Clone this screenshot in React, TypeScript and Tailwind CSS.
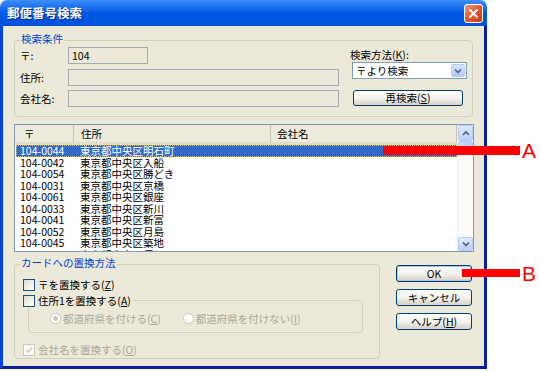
import React from 'react'

const ROWS = [
  ['104-0044', '東京都中央区明石町'],
  ['104-0042', '東京都中央区入船'],
  ['104-0054', '東京都中央区勝どき'],
  ['104-0031', '東京都中央区京橋'],
  ['104-0061', '東京都中央区銀座'],
  ['104-0033', '東京都中央区新川'],
  ['104-0041', '東京都中央区新富'],
  ['104-0052', '東京都中央区月島'],
  ['104-0045', '東京都中央区築地'],
  ['104-0051', '東京都中央区佃'],
]

function U({ c }: { c: string }) {
  return <span className="underline underline-offset-1">{c}</span>
}

function XpButton({ children, className = '' }: { children: React.ReactNode; className?: string }) {
  return (
    <div className={`flex items-center justify-center rounded-[3px] border border-[#003c74] bg-gradient-to-b from-white via-[#f4f3ee] to-[#d6d0c5] text-black ${className}`}>
      {children}
    </div>
  )
}

function Chevron({ up }: { up?: boolean }) {
  return (
    <svg width="8" height="6" viewBox="0 0 8 6">
      <path d={up ? 'M1 5 L4 2 L7 5' : 'M1 1.5 L4 4.5 L7 1.5'} fill="none" stroke="#4d6185" strokeWidth="1.6" />
    </svg>
  )
}

function Checkbox({ checked, disabled }: { checked?: boolean; disabled?: boolean }) {
  return (
    <div className={`w-[12px] h-[12px] flex items-center justify-center border ${disabled ? 'border-[#cac8bb] bg-white' : 'border-[#1c5180] bg-gradient-to-br from-[#dcdcd7] to-white'}`}>
      {checked && (
        <svg width="8" height="8" viewBox="0 0 8 8">
          <path d="M1 4 L3 6 L7 1.5" fill="none" stroke={disabled ? '#cac8bb' : '#21a121'} strokeWidth="1.6" />
        </svg>
      )}
    </div>
  )
}

function Radio({ checked }: { checked?: boolean }) {
  return (
    <div className="w-[11px] h-[11px] rounded-full border border-[#cac8bb] bg-white flex items-center justify-center">
      {checked && <div className="w-[5px] h-[5px] rounded-full bg-[#cac8bb]" />}
    </div>
  )
}

export default function App() {
  return (
    <div className="relative w-[540px] h-[371px] bg-white font-['Noto_Sans_CJK_JP','Noto_Sans',sans-serif] text-[10.5px] leading-[12px] text-black overflow-hidden">
      {/* Window */}
      <div className="w-[487px] h-[369px] flex flex-col">
        {/* Title bar */}
        <div className="h-[26px] rounded-t-[7px] bg-gradient-to-b from-[#3d8ef7] via-[#0058e6] to-[#0052da] flex items-center justify-between pl-[7px] pr-[4px]">
          <span className="text-white font-bold text-[12.5px] leading-[14px] [text-shadow:1px_1px_0_#0a2a8a]">郵便番号検索</span>
          <div className="w-[19px] h-[19px] rounded-[3px] border border-white bg-gradient-to-br from-[#f09a7c] via-[#e2572f] to-[#c43c18] flex items-center justify-center">
            <svg width="11" height="11" viewBox="0 0 11 11">
              <path d="M1.5 1.5 L9.5 9.5 M9.5 1.5 L1.5 9.5" stroke="white" strokeWidth="2" />
            </svg>
          </div>
        </div>

        {/* Body */}
        <div className="flex-1 bg-[#ece9d8] border-l-[3px] border-r-[3px] border-b-[3px] border-l-[#0842d6] border-r-[#0a1f9e] border-b-[#0a1f9e] pl-[11px] pt-[14px]">
          {/* 検索条件 */}
          <div className="relative w-[459px] h-[77px] rounded-[4px] border border-[#d0d0bf] pt-[6px] pl-[5px] flex">
            <span className="absolute left-[5px] top-[-8px] bg-[#ece9d8] px-[1px] text-[#0046d5]">検索条件</span>
            <div className="flex flex-col">
              <div className="flex items-center h-[17px]">
                <span className="w-[48px]">〒:</span>
                <div className="w-[80px] h-[17px] border border-[#a5acb5] px-[3px] flex items-center">104</div>
              </div>
              <div className="flex items-center h-[17px] mt-[5px]">
                <span className="w-[48px]">住所:</span>
                <div className="w-[271px] h-[17px] border border-[#a5acb5]" />
              </div>
              <div className="flex items-center h-[17px] mt-[4px]">
                <span className="w-[48px]">会社名:</span>
                <div className="w-[271px] h-[17px] border border-[#a5acb5]" />
              </div>
            </div>
            <div className="flex flex-col ml-[11px]">
              <span className="h-[15px] flex items-center">検索方法(<U c="K" />):</span>
              <div className="ml-[2px] w-[115px] h-[17px] border border-[#7f9db9] bg-white flex items-center justify-between pl-[3px] pr-[1px]">
                <span>〒より検索</span>
                <div className="w-[14px] h-[13px] rounded-[2px] bg-gradient-to-b from-[#d9e5fd] to-[#b4c8f6] border border-[#b6cbf6] flex items-center justify-center">
                  <Chevron />
                </div>
              </div>
              <XpButton className="ml-[3px] mt-[11px] w-[110px] h-[16px]">再検索(<U c="S" />)</XpButton>
            </div>
          </div>

          {/* List view */}
          <div className="mt-[7px] w-[460px] h-[128px] border border-[#7f9db9] bg-white flex overflow-hidden">
            <div className="w-[442px] flex flex-col">
              <div className="h-[20px] flex bg-[#ebeadb] border-b-[3px] border-b-[#e2decd] shrink-0">
                <div className="w-[59px] pl-[9px] flex items-center border-r border-r-[#c7c5b2]">〒</div>
                <div className="w-[197px] pl-[7px] flex items-center border-r border-r-[#c7c5b2]">住所</div>
                <div className="flex-1 pl-[6px] flex items-center border-r border-r-[#c7c5b2]">会社名</div>
              </div>
              <div className="flex flex-col">
                {ROWS.map(([code, addr], i) => (
                  <div
                    key={code}
                    className={`h-[11.5px] shrink-0 flex items-center ml-[1px] ${i === 0 ? 'bg-[#316ac5] text-white outline-1 outline-dotted outline-[#c9b97a] -outline-offset-1' : ''}`}
                  >
                    <span className="w-[58px] pl-[4px] leading-[11.5px]">{code}</span>
                    <span className="pl-[6px] leading-[11.5px]">{addr}</span>
                  </div>
                ))}
              </div>
            </div>
            {/* scrollbar */}
            <div className="w-[16px] flex flex-col bg-[#fbfbf9] border-l border-l-[#eeede5]">
              <div className="h-[16px] rounded-[2px] bg-gradient-to-b from-[#e0e9fd] to-[#bccef8] border border-[#b6cbf6] flex items-center justify-center">
                <Chevron up />
              </div>
              <div className="h-[6px] rounded-[2px] bg-gradient-to-r from-[#cad9fb] to-[#b8ccf7] border border-[#b6cbf6]" />
              <div className="flex-1" />
              <div className="h-[14px] rounded-[2px] bg-gradient-to-b from-[#e0e9fd] to-[#bccef8] border border-[#b6cbf6] flex items-center justify-center">
                <Chevron />
              </div>
            </div>
          </div>

          {/* Bottom */}
          <div className="mt-[12px] flex">
            <div className="relative w-[366px] h-[95px] rounded-[4px] border border-[#d0d0bf] pl-[8px] pt-[13px]">
              <span className="absolute left-[5px] top-[-8px] bg-[#ece9d8] px-[1px] text-[#0046d5]">カードへの置換方法</span>
              <div className="flex items-center gap-[3px] h-[13px]">
                <Checkbox />
                <span>〒を置換する(<U c="Z" />)</span>
              </div>
              <div className="relative mt-[9px] ml-[5px] w-[335px] h-[33px] rounded-[4px] border border-[#d0d0bf] flex items-center pl-[21px] pt-[4px]">
                <div className="absolute left-[-6px] top-[-7px] flex items-center gap-[3px] h-[13px] bg-[#ece9d8] pr-[2px]">
                  <Checkbox />
                  <span>住所1を置換する(<U c="A" />)</span>
                </div>
                <div className="flex items-center gap-[2px] text-[#aca899]">
                  <Radio checked />
                  <span>都道府県を付ける(<U c="C" />)</span>
                </div>
                <div className="flex items-center gap-[2px] text-[#aca899] ml-[22px]">
                  <Radio />
                  <span>都道府県を付けない(<U c="I" />)</span>
                </div>
              </div>
              <div className="flex items-center gap-[3px] h-[13px] mt-[10px] text-[#aca899]">
                <Checkbox checked disabled />
                <span>会社名を置換する(<U c="O" />)</span>
              </div>
            </div>
            <div className="ml-[16px] mt-[1px] flex flex-col gap-[7px]">
              <XpButton className="w-[76px] h-[17px] border-[#2e5ea8] shadow-[inset_0_0_0_1px_#a8c4f0]">OK</XpButton>
              <XpButton className="w-[76px] h-[17px]">キャンセル</XpButton>
              <XpButton className="w-[76px] h-[17px]">ヘルプ(<U c="H" />)</XpButton>
            </div>
          </div>
        </div>
      </div>

      {/* Annotations */}
      <div className="absolute left-[383px] top-[146px] w-[137px] h-[9px] bg-[#ff0000]" />
      <span className="absolute left-[522px] top-[139px] text-[#ff0000] font-['Liberation_Sans',sans-serif] text-[21px] leading-[24px]">A</span>
      <div className="absolute left-[462px] top-[269px] w-[58px] h-[8px] bg-[#ff0000]" />
      <span className="absolute left-[522px] top-[262px] text-[#ff0000] font-['Liberation_Sans',sans-serif] text-[21px] leading-[24px]">B</span>
    </div>
  )
}
